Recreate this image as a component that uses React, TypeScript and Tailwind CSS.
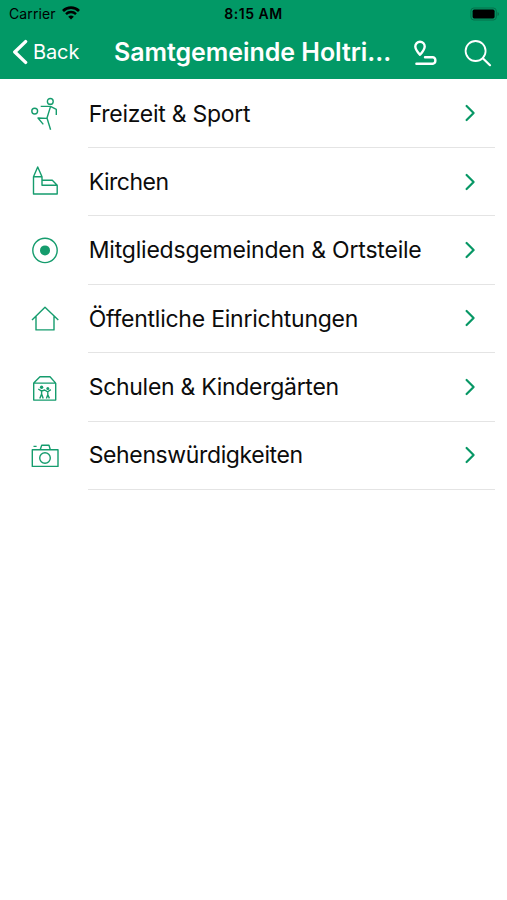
import type { ReactNode } from 'react';

interface Category {
  label: string;
  // letter spacing of the label
  tracking: string;
  icon: ReactNode;
}

const categories: Category[] = [
  {
    label: 'Freizeit & Sport',
    tracking: 'tracking-[-0.27px]',
    icon: (
      <>
        <circle cx="21.3" cy="3.4" r="2.9" />
        <circle cx="5.7" cy="13.1" r="2.9" />
        <path d="M11.7 8.4H21.5L27.3 11.4V17M21.5 8.6L18 20L21.6 31.7M18 20.4L9 20L14.3 26.4" />
      </>
    ),
  },
  {
    label: 'Kirchen',
    tracking: 'tracking-[-0.5px]',
    icon: <path d="M4.5 28V10.7L8.7 1L13 10.7V19.3H28.2V28ZM4.5 10.7H13M13 14.3H23.3L28.2 19.3" />,
  },
  {
    label: 'Mitgliedsgemeinden & Ortsteile',
    tracking: 'tracking-[-0.2px]',
    icon: (
      <>
        <circle cx="16" cy="15.4" r="12.2" />
        <circle cx="16" cy="15.4" r="5" fill="currentColor" stroke="none" />
      </>
    ),
  },
  {
    label: 'Öffentliche Einrichtungen',
    tracking: 'tracking-[-0.24px]',
    icon: <path d="M3 16.9L16 4.2L29.3 16.9M7 13.4V26.9H25V13.4" />,
  },
  {
    label: 'Schulen & Kindergärten',
    tracking: 'tracking-[-0.29px]',
    icon: (
      <>
        <path d="M4.7 12.1H26.7V29.1H4.7ZM4.7 12.1L11 5.8H21L26.7 12.1" />
        <g fill="currentColor" stroke="none">
          <circle cx="12.6" cy="16.2" r="1.7" />
          <circle cx="18.8" cy="17.6" r="1.5" />
        </g>
        <path d="M9.3 18L12.6 20.2L15.6 19L18.8 20.8L21.8 18.6M12.6 19V23L10.8 27.4M12.6 23L14.2 27.4M18.8 20V23.8L17.4 27.4M18.8 23.8L20.4 27.4" />
      </>
    ),
  },
  {
    label: 'Sehenswürdigkeiten',
    tracking: 'tracking-[-0.37px]',
    icon: (
      <>
        <path d="M3.3 9.7H29V26.4H3.3ZM11.2 9.7L12.7 5.2H20L21.3 9.7M4.5 6.4H7.6" />
        <circle cx="16" cy="18" r="5.3" />
      </>
    ),
  },
];

function StatusBar() {
  return (
    <div className="flex h-[27px] items-center justify-between pl-[9px] pr-[7px] text-black">
      <div className="flex w-[180px] items-center gap-[6px]">
        <span className="text-[14px] tracking-[0.1px]">Carrier</span>
        <svg className="-mt-[2px] h-[14px] w-[18px]" viewBox="0 0 18 14" fill="none" stroke="currentColor">
          <path d="M1 5A11.3 11.3 0 0 1 17 5" strokeWidth="2.7" />
          <path d="M4 8.1A7.1 7.1 0 0 1 14 8.1" strokeWidth="2.4" />
          <path d="M9 13.6L6.2 10.8A4 4 0 0 1 11.8 10.8Z" fill="currentColor" stroke="none" />
        </svg>
      </div>
      <span className="text-[14px] font-semibold tracking-[0.5px]">8:15 AM</span>
      <div className="flex w-[182px] justify-end">
        <svg className="h-[14px] w-[30px]" viewBox="0 0 30 14">
          <rect x="0.9" y="1" width="25.4" height="12" rx="3" fill="none" stroke="#06704b" />
          <rect x="2.6" y="2.6" width="22" height="8.8" rx="1.6" fill="#000" />
          <path d="M27.5 5V9Q29 8.4 29 7Q29 5.6 27.5 5Z" fill="#06704b" />
        </svg>
      </div>
    </div>
  );
}

function NavBar() {
  return (
    <div className="flex h-[52px] items-center pl-[12px] text-white">
      <button className="flex w-[102px] items-center gap-[5px]">
        <svg className="-mt-[2px] h-[26px] w-[16px]" viewBox="0 0 16 26" fill="none" stroke="currentColor" strokeWidth="3.4" strokeLinecap="round" strokeLinejoin="round">
          <path d="M13.6 2.6L2.8 13L13.6 23.4" />
        </svg>
        <span className="-mt-[2px] text-[20px] tracking-[-0.1px]">Back</span>
      </button>
      <h1 className="w-[284px] whitespace-nowrap text-[25px] font-semibold tracking-[-0.05px]">
        Samtgemeinde Holtri...
      </h1>
      <button className="w-[66px] pl-[14px]">
        <svg className="h-[28px] w-[26px]" viewBox="0 0 26 28" fill="none" stroke="currentColor" strokeWidth="2.4" strokeLinecap="round" strokeLinejoin="round">
          <path d="M8 15.8C5.4 12.8 3.3 10.4 3.3 7.4A4.7 4.7 0 0 1 12.7 7.4C12.7 10.4 10.6 12.8 8 15.8Z" />
          <path d="M13 18.2H20.8A3.4 3.4 0 0 1 20.8 24.8H4.4" />
        </svg>
      </button>
      <button>
        <svg className="-mt-[1px] h-[28px] w-[28px]" viewBox="0 0 28 28" fill="none" stroke="currentColor" strokeWidth="1.8" strokeLinecap="round">
          <circle cx="11.6" cy="12" r="10" />
          <path d="M18.8 19.2L26 26.2" strokeWidth="2.2" />
        </svg>
      </button>
    </div>
  );
}

function CategoryRow({ label, tracking, icon }: Category) {
  return (
    <li className="flex h-[68.4px] pl-[29px] pr-[12px]">
      <svg className="h-[32px] w-[32px] self-center overflow-visible text-[#159c6d]" viewBox="0 0 32 32" fill="none" stroke="currentColor" strokeWidth="1.4" strokeLinejoin="round">
        {icon}
      </svg>
      <div className="ml-[27px] flex flex-1 items-center justify-between border-b border-[#e4e4e4] pl-[0.7px] pr-[19px]">
        <span className={`whitespace-nowrap pt-px text-[23px] text-[#0c0c0c] ${tracking}`}>{label}</span>
        <svg className="h-[18px] w-[12px] text-[#079765]" viewBox="0 0 12 18" fill="none" stroke="currentColor" strokeWidth="2.2" strokeLinecap="round" strokeLinejoin="round">
          <path d="M2.6 2L9.6 9L2.6 16" />
        </svg>
      </div>
    </li>
  );
}

export default function App() {
  return (
    <div className="h-[900px] w-[507px] overflow-hidden bg-white font-['Inter',sans-serif]">
      <header className="h-[79px] bg-[#029966]">
        <StatusBar />
        <NavBar />
      </header>
      <ul className="pt-[0.6px]">
        {categories.map((category) => (
          <CategoryRow key={category.label} {...category} />
        ))}
      </ul>
    </div>
  );
}
